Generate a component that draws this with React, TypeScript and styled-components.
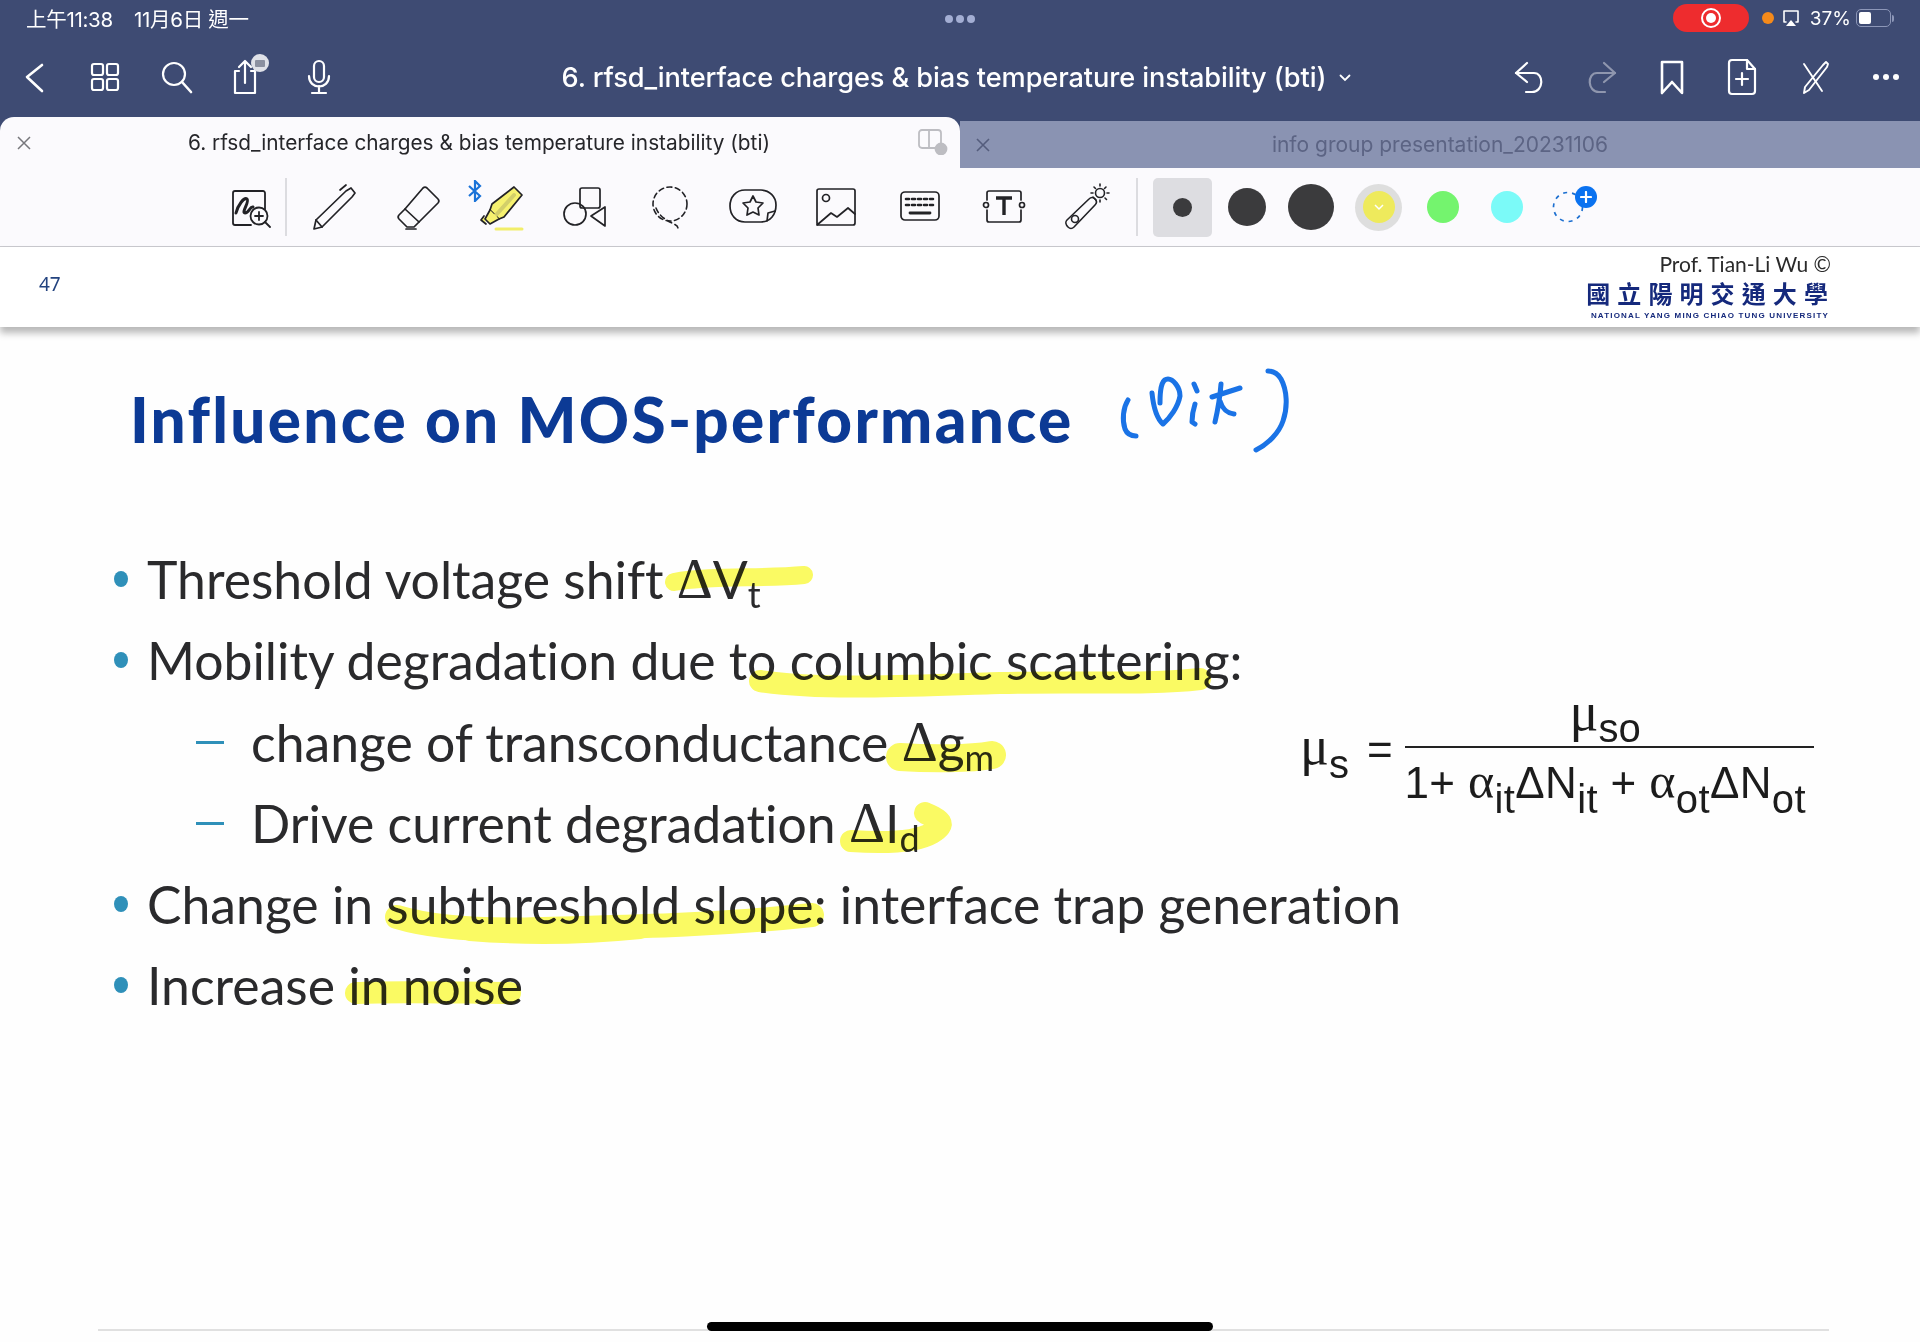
import React from "react";
import styled, { createGlobalStyle } from "styled-components";

const GlobalStyle = createGlobalStyle`
  html, body { margin: 0; padding: 0; background: #fff; }
  * { box-sizing: border-box; }
`;

const Page = styled.div`
  width: 1920px;
  height: 1342px;
  overflow: hidden;
  position: relative;
  background: #fefefe;
  font-family: Inter, "Noto Sans CJK TC", sans-serif;
`;

const Top = styled.div`
  height: 117px;
  background: #3e4b73;
  color: #fff;
`;

const StatusBar = styled.div`
  height: 38px;
  display: flex;
  align-items: center;
  padding-left: 26px;
  padding-bottom: 2px;
  font-size: 20.5px;
  position: relative;
`;

const StatusClock = styled.span`
  width: 108px;
  letter-spacing: -0.3px;
`;

const StatusDate = styled.span`
  letter-spacing: -0.3px;
`;

const Dots = styled.div`
  position: absolute;
  left: 945px;
  top: 15px;
  display: flex;
  gap: 3px;
`;

const Dot = styled.i`
  width: 8px;
  height: 8px;
  border-radius: 50%;
  background: #a3aed3;
`;

const StatusRight = styled.div`
  margin-left: auto;
  display: flex;
  align-items: center;
  height: 38px;
  padding-right: 26px;
`;

const RecordPill = styled.div`
  width: 76px;
  height: 28px;
  border-radius: 14px;
  background: #ee2c2e;
  display: flex;
  align-items: center;
  justify-content: center;
  margin-right: 13px;
  filter: blur(0.5px);
`;

const RecordRing = styled.div`
  width: 20px;
  height: 20px;
  border-radius: 50%;
  background: #ee2c2e;
  border: 2px solid #fff;
  display: flex;
  align-items: center;
  justify-content: center;
  &::after {
    content: "";
    width: 10px;
    height: 10px;
    border-radius: 50%;
    background: #fff;
  }
`;

const OrangeDot = styled.div`
  width: 12px;
  height: 12px;
  border-radius: 50%;
  background: #f58a1a;
  margin-right: 7px;
`;

const Percent = styled.span`
  font-size: 19px;
  margin: 0 5px 0 9px;
`;

const BatteryBody = styled.div`
  width: 35px;
  height: 18px;
  border: 1.5px solid #8d97b8;
  border-radius: 5px;
  padding: 2px;
  &::before {
    content: "";
    display: block;
    width: 12px;
    height: 100%;
    border-radius: 2px;
    background: #fff;
  }
`;

const BatteryCap = styled.div`
  width: 2px;
  height: 7px;
  margin-left: 1px;
  border-radius: 0 2px 2px 0;
  background: #8d97b8;
`;

const NavBar = styled.div`
  height: 79px;
  display: flex;
  align-items: center;
  padding-bottom: 1px;
  margin-left: -2px;
`;

const NavSlot = styled.div<{ $dim?: boolean }>`
  width: 71.5px;
  height: 48px;
  display: flex;
  align-items: center;
  justify-content: center;
  position: relative;
  opacity: ${(p) => (p.$dim ? 0.42 : 1)};
`;

const NavTitle = styled.div`
  flex: 1;
  display: flex;
  align-items: center;
  padding-left: 206px;
  font-size: 27.2px;
  font-weight: 500;
  letter-spacing: -0.1px;
  white-space: nowrap;
`;

const TitleCaret = styled.svg`
  margin-left: 13px;
  margin-top: 2px;
`;

const NavRight = styled.div`
  display: flex;
`;

const ShareBadge = styled.div`
  position: absolute;
  left: 38px;
  top: 1px;
  width: 18px;
  height: 18px;
  border-radius: 50%;
  background: #dfe1e8;
  display: flex;
  align-items: center;
  justify-content: center;
  &::after {
    content: "";
    width: 10px;
    height: 7px;
    background: #8b90a0;
    border-radius: 1px;
  }
`;

const TabBar = styled.div`
  height: 51px;
  display: flex;
  background: #3e4b73;
`;

const ActiveTab = styled.div`
  width: 960px;
  background: #fbfafd;
  border-radius: 14px 14px 0 0;
  display: flex;
  align-items: center;
  position: relative;
  font-size: 20.8px;
  color: #26262a;
`;

const IdleTab = styled.div`
  flex: 1;
  margin-top: 4px;
  background: #8a93b2;
  display: flex;
  align-items: center;
  position: relative;
  font-size: 21px;
  color: #5c6484;
`;

const TabClose = styled.svg`
  flex: none;
`;

const TabLabel = styled.span<{ $balance: number }>`
  flex: 1;
  text-align: center;
  white-space: nowrap;
  margin-right: ${(p) => p.$balance}px;
`;

const SplitIcon = styled.svg`
  position: absolute;
  left: 918px;
  top: 12px;
`;

const ToolBar = styled.div`
  height: 79px;
  background: #fbfafd;
  border-bottom: 1.5px solid #c9c9ce;
  display: flex;
  align-items: center;
  padding-left: 209px;
`;

const ToolSlot = styled.div<{ $w?: number }>`
  width: ${(p) => p.$w ?? 83.7}px;
  height: 60px;
  display: flex;
  align-items: center;
  justify-content: center;
  position: relative;
  flex: none;
`;

const ToolDivider = styled.div<{ $before?: number; $after: number }>`
  width: 1.5px;
  height: 58px;
  background: #dcdce0;
  margin-left: ${(p) => p.$before ?? 0}px;
  margin-right: ${(p) => p.$after}px;
  flex: none;
`;

const Bluetooth = styled.svg`
  position: absolute;
  left: 8px;
  top: 3px;
`;

const SelectedBox = styled.div`
  width: 59px;
  height: 59px;
  margin-left: 15px;
  margin-right: 3px;
  border-radius: 5px;
  background: #dddde1;
  display: flex;
  align-items: center;
  justify-content: center;
  flex: none;
`;

const ColorSlot = styled.div<{ $w?: number; $shift?: number }>`
  width: ${(p) => p.$w ?? 64}px;
  margin-left: ${(p) => p.$shift ?? 0}px;
  display: flex;
  align-items: center;
  justify-content: center;
  flex: none;
  position: relative;
`;

const Swatch = styled.div<{ $size: number; $color: string }>`
  width: ${(p) => p.$size}px;
  height: ${(p) => p.$size}px;
  border-radius: 50%;
  background: ${(p) => p.$color};
`;

const YellowRing = styled.div`
  width: 47px;
  height: 47px;
  border-radius: 50%;
  background: #dedede;
  display: flex;
  align-items: center;
  justify-content: center;
`;

const YellowFill = styled.div`
  width: 32px;
  height: 32px;
  border-radius: 50%;
  background: #eeea5c;
  display: flex;
  align-items: center;
  justify-content: center;
`;

const AddBadge = styled.div`
  position: absolute;
  left: 36px;
  top: -5px;
  width: 22px;
  height: 22px;
  border-radius: 50%;
  background: #0a72f0;
  color: #fff;
  display: flex;
  align-items: center;
  justify-content: center;
`;

const SlideHeader = styled.div`
  height: 80px;
  background: #fff;
  box-shadow: 0 6px 7px rgba(0, 0, 0, 0.28);
  position: relative;
  z-index: 1;
  display: flex;
  align-items: center;
  justify-content: space-between;
  padding: 0 89px 0 39px;
`;

const PageNumber = styled.span`
  font-family: "Noto Sans", sans-serif;
  font-size: 19px;
  color: #23437f;
  margin-bottom: 7px;
`;

const Brand = styled.div`
  display: flex;
  flex-direction: column;
  align-items: flex-end;
  margin-top: -2px;
`;

const ProfName = styled.div`
  font-family: Lato, sans-serif;
  font-size: 21px;
  line-height: 24px;
  color: #2a2a2a;
  margin-bottom: 3px;
`;

const SchoolName = styled.div`
  font-family: "Noto Sans CJK TC", sans-serif;
  font-weight: 700;
  font-size: 24px;
  line-height: 28px;
  letter-spacing: 7.1px;
  margin-right: -4px;
  color: #15297c;
`;

const SchoolLatin = styled.div`
  font-family: "Liberation Sans", sans-serif;
  font-weight: 700;
  font-size: 8px;
  line-height: 11px;
  letter-spacing: 1.17px;
  margin-top: 3px;
  margin-right: 2px;
  white-space: nowrap;
  color: #15297c;
`;

const Slide = styled.div`
  position: relative;
  height: 1016px;
  padding-left: 130px;
  font-family: Lato, "Liberation Sans", sans-serif;
  font-variant-ligatures: none;
`;

const Title = styled.h1`
  margin: 0;
  padding-top: 58px;
  height: 212px;
  font-size: 62px;
  line-height: 68px;
  font-weight: 900;
  letter-spacing: 2.3px;
  color: #0c3a95;
  white-space: nowrap;
`;

const BulletList = styled.div`
  margin-left: -16px;
`;

const Row = styled.div<{ $h: number; $sub?: boolean }>`
  height: ${(p) => p.$h}px;
  display: flex;
  align-items: center;
  padding-left: ${(p) => (p.$sub ? 82 : 0)}px;
  font-size: 51.7px;
  color: #2a2a2c;
  white-space: nowrap;
`;

const BulletDot = styled.i`
  width: 14px;
  height: 16px;
  border-radius: 50%;
  background: #2f90b9;
  margin-right: 19px;
  flex: none;
`;

const SubDash = styled.i`
  width: 28px;
  height: 3px;
  background: #2f90b9;
  margin-right: 27px;
  flex: none;
`;

const Delta = styled.span`
  font-family: "Liberation Serif", serif;
  font-size: 56px;
`;

const Low = styled.span`
  font-size: 36px;
  position: relative;
  top: 15px;
`;

/* the pasted formula image floats on the slide */
const Formula = styled.div`
  position: absolute;
  left: 1300px;
  top: 361px;
  display: flex;
  align-items: center;
  font-family: "Liberation Sans", sans-serif;
  font-size: 44px;
  color: #1c1c1c;
`;

const Mu = styled.span`
  font-family: "Liberation Serif", serif;
  font-size: 54px;
  position: relative;
  top: -6px;
`;

const Alpha = styled.span`
  font-family: "Liberation Serif", serif;
  font-size: 50px;
`;

const Lower = styled.span<{ $top?: number }>`
  font-size: 40px;
  position: relative;
  top: ${(p) => p.$top ?? 15}px;
`;

const Equals = styled.span`
  margin: 0 12px 0 18px;
  position: relative;
  top: -2px;
`;

const Fraction = styled.div`
  display: flex;
  flex-direction: column;
  align-items: center;
  width: 409px;
`;

const Numerator = styled.div`
  height: 60px;
  line-height: 60px;
  border-bottom: 2px solid #222;
  width: 100%;
  padding-right: 8px;
  text-align: center;
  white-space: nowrap;
`;

const Denominator = styled.div`
  height: 68px;
  line-height: 66px;
  padding-right: 8px;
  letter-spacing: 0.37px;
  white-space: nowrap;
`;

const Ink = styled.svg`
  position: absolute;
  left: 0;
  top: -326px;
  pointer-events: none;
`;

const Marker = styled(Ink)`
  mix-blend-mode: multiply;
`;

const FootRule = styled.div`
  position: absolute;
  left: 98px;
  top: 1002px;
  width: 1731px;
  height: 2px;
  background: #e0e0e0;
`;

const HomeBar = styled.div`
  position: absolute;
  left: 707px;
  top: 995px;
  width: 506px;
  height: 9px;
  border-radius: 5px;
  background: #000;
`;

const I = ({ w = 48, h = 48, c = "#fff", sw = 2.2, children }: { w?: number; h?: number; c?: string; sw?: number; children: React.ReactNode }) => (
  <svg width={w} height={h} viewBox={`0 0 ${w} ${h}`} fill="none" stroke={c} strokeWidth={sw} strokeLinecap="round" strokeLinejoin="round">
    {children}
  </svg>
);

const T = "#222226";

const markerStrokes = [
  { d: "M 674 581 C 710 574 760 578 804 574", w: 18 },
  { d: "M 760 680 C 830 690 920 684 1000 682 S 1150 684 1200 678", w: 22 },
  { d: "M 900 756 C 930 758 970 758 992 754", w: 28 },
  { d: "M 851 840 C 880 842 915 842 932 832 S 938 818 925 812", w: 22 },
  { d: "M 397 916 C 430 926 480 930 540 928 S 700 926 812 914", w: 24 },
  { d: "M 470 930 C 520 934 580 934 640 928", w: 20 },
  { d: "M 356 992 C 400 990 470 992 510 992", w: 22 },
];

const App = () => (
  <Page>
    <GlobalStyle />
    <Top>
      <StatusBar>
        <StatusClock>上午11:38</StatusClock>
        <StatusDate>11月6日 週一</StatusDate>
        <Dots>
          <Dot />
          <Dot />
          <Dot />
        </Dots>
        <StatusRight>
          <RecordPill>
            <RecordRing />
          </RecordPill>
          <OrangeDot />
          <I w={20} h={20} sw={1.6}>
            <path d="M5 14H3V3h14v11h-2" />
            <path d="M10 12l5 6H5z" fill="#fff" stroke="none" />
          </I>
          <Percent>37%</Percent>
          <BatteryBody />
          <BatteryCap />
        </StatusRight>
      </StatusBar>
      <NavBar>
        <NavSlot>
          <I>
            <path d="M32 12L17 24l15 14" strokeWidth="2.6" />
          </I>
        </NavSlot>
        <NavSlot>
          <I>
            <rect x="11" y="11" width="11" height="11" rx="2" />
            <rect x="26" y="11" width="11" height="11" rx="2" />
            <rect x="11" y="26" width="11" height="11" rx="2" />
            <rect x="26" y="26" width="11" height="11" rx="2" />
          </I>
        </NavSlot>
        <NavSlot>
          <I>
            <circle cx="21" cy="21" r="11" />
            <path d="M29 29l9 10" strokeWidth="2.6" />
          </I>
        </NavSlot>
        <NavSlot>
          <I>
            <path d="M15 18h-4v22h20V18h-4" />
            <path d="M21 30V9M15 14l6-6 6 6" />
          </I>
          <ShareBadge />
        </NavSlot>
        <NavSlot>
          <I>
            <rect x="18" y="8" width="10" height="21" rx="5" />
            <path d="M13 23c0 14 20 14 20 0M23 33v6M16 40h14" />
          </I>
        </NavSlot>
        <NavTitle>
          6. rfsd_interface charges &amp; bias temperature instability (bti)
          <TitleCaret width="12" height="8" viewBox="0 0 12 8" fill="none" stroke="#fff" strokeWidth="1.8" strokeLinecap="round">
            <path d="M1.5 1.5L6 6l4.5-4.5" />
          </TitleCaret>
        </NavTitle>
        <NavRight>
          <NavSlot>
            <I>
              <path d="M24 10L13 20l11 9" />
              <path d="M13 20h18c10 0 10 19-2 19h-6" />
            </I>
          </NavSlot>
          <NavSlot $dim>
            <I>
              <path d="M30 10l11 10-11 9" />
              <path d="M41 20H23c-10 0-10 19 2 19h6" />
            </I>
          </NavSlot>
          <NavSlot>
            <I sw={2.6}>
              <path d="M16 9h20v31l-10-11-10 11z" />
            </I>
          </NavSlot>
          <NavSlot>
            <I>
              <path d="M15 7h15l8 9v22a3 3 0 0 1-3 3H15a3 3 0 0 1-3-3V10a3 3 0 0 1 3-3z" />
              <path d="M30 7v9h8M25 20v12M19 26h12" />
            </I>
          </NavSlot>
          <NavSlot>
            <I sw={1.9}>
              <path d="M15 11l18 27" />
              <path d="M34 12l3-3 2 2-1 3-18 23-5 3 1-6z" />
            </I>
          </NavSlot>
          <NavSlot>
            <I w={30} h={8} c="none">
              <circle cx="7" cy="4" r="3" fill="#fff" />
              <circle cx="17" cy="4" r="3" fill="#fff" />
              <circle cx="27" cy="4" r="3" fill="#fff" />
            </I>
          </NavSlot>
        </NavRight>
      </NavBar>
    </Top>
    <TabBar>
      <ActiveTab>
        <TabClose width="48" height="14" viewBox="0 0 48 14" fill="none" stroke="#77777c" strokeWidth="1.5">
          <path d="M18 1l12 12M30 1L18 13" />
        </TabClose>
        <TabLabel $balance={50}>6. rfsd_interface charges &amp; bias temperature instability (bti)</TabLabel>
        <SplitIcon width="30" height="26" viewBox="0 0 30 26" fill="none" stroke="#bdbdc2" strokeWidth="1.8">
          <rect x="1" y="1" width="22" height="18" rx="3" />
          <path d="M11 1v18" />
          <circle cx="23" cy="20" r="5.5" fill="#bdbdc2" />
        </SplitIcon>
      </ActiveTab>
      <IdleTab>
        <TabClose width="46" height="14" viewBox="0 0 46 14" fill="none" stroke="#555d7d" strokeWidth="1.6">
          <path d="M17 1l12 12M29 1L17 13" />
        </TabClose>
        <TabLabel $balance={46}>info group presentation_20231106</TabLabel>
      </IdleTab>
    </TabBar>
    <ToolBar>
      <ToolSlot $w={76}>
        <I c={T} sw={1.8}>
          <path d="M42 24V8a2 2 0 0 0-2-2H12a2 2 0 0 0-2 2v30a2 2 0 0 0 2 2h16" transform="translate(0 2)" />
          <path d="M13 30c2-8 8-16 11-14s-6 14-2 14 5-7 8-6" strokeWidth="3" />
          <circle cx="36" cy="33" r="8.5" fill="#fbfafd" />
          <path d="M42 39l5 5M36 29v8M32 33h8" />
        </I>
      </ToolSlot>
      <ToolDivider $after={6} />
      <ToolSlot>
        <I c={T} sw={1.7}>
          <path d="M4 46l2-9L36 8l5-3 4 5-3 4-30 30z" />
          <path d="M6 37l6 7M30 7l6-5" />
        </I>
      </ToolSlot>
      <ToolSlot>
        <I c={T} sw={1.7}>
          <path d="M33 5l11 11a3 3 0 0 1 0 4L25 39 11 26 29 5a3 3 0 0 1 4 0z" />
          <path d="M11 26l-6 6a3 3 0 0 0 0 4l8 8h7l5-5M12 46h10" />
        </I>
      </ToolSlot>
      <ToolSlot>
        <Bluetooth width="14" height="22" viewBox="0 0 14 22" fill="none" stroke="#1a73d8" strokeWidth="2.2">
          <path d="M1 6l11 10-5 5V1l5 5L1 16" />
        </Bluetooth>
        <I c={T} sw={1.7}>
          <path d="M36 4l8 8-18 22-5 2-9-9 2-6z" fill="#f6f16f" />
          <path d="M36 12l-18 20" stroke="#d3cf6a" strokeWidth="4" />
          <path d="M12 27l-5 9 5 5 9-5M6 33l-3 4 5 4" fill="#f6f16f" />
          <path d="M18 46h26" stroke="#f2ee6a" strokeWidth="3" />
        </I>
      </ToolSlot>
      <ToolSlot>
        <I c={T} sw={1.7}>
          <rect x="19" y="5" width="20" height="20" rx="2" />
          <circle cx="14" cy="31" r="11" />
          <path d="M44 24v19L30 33z" />
        </I>
      </ToolSlot>
      <ToolSlot>
        <I c={T} sw={1.6}>
          <g strokeDasharray="5 3.5">
            <circle cx="25" cy="21" r="17" />
            <path d="M11 25c3 8 10 12 16 15s6 3 6 7" />
          </g>
        </I>
      </ToolSlot>
      <ToolSlot>
        <I c={T} sw={1.7}>
          <path d="M16 7h16a15 15 0 0 1 15 15c0 10-6 17-15 17H16C7 39 1 32 1 23 1 14 7 7 16 7z" />
          <path d="M24 13l3 6 7 1-5 5 1 7-6-3-6 3 1-7-5-5 7-1z" />
          <path d="M46 28l-7 2-1 8" />
        </I>
      </ToolSlot>
      <ToolSlot>
        <I c={T} sw={1.7}>
          <rect x="5" y="6" width="38" height="36" rx="2" />
          <circle cx="14" cy="15" r="3.5" />
          <path d="M5 42l14-12 6 4 11-9 7 6" />
        </I>
      </ToolSlot>
      <ToolSlot>
        <I c={T} sw={1.7}>
          <rect x="5" y="9" width="38" height="28" rx="4" />
          <path d="M10 16h28M10 22h28" strokeDasharray="3 3" strokeWidth="2.6" />
          <path d="M14 30h20" strokeWidth="2.8" />
        </I>
      </ToolSlot>
      <ToolSlot>
        <I c={T} sw={1.7}>
          <path d="M7 17v-7a2 2 0 0 1 2-2h30a2 2 0 0 1 2 2v7M7 27v10a2 2 0 0 0 2 2h30a2 2 0 0 0 2-2V27" />
          <circle cx="6" cy="22" r="2.5" />
          <circle cx="42" cy="22" r="2.5" />
          <path d="M16 15h16M24 15v17" strokeWidth="3.4" strokeLinecap="butt" />
        </I>
      </ToolSlot>
      <ToolSlot>
        <I c={T} sw={1.6}>
          <path d="M3 37L25 16c2-2 4-2 6 0s2 4 0 6L10 44c-2 2-4 2-6 0s-3-5-1-7z" />
          <circle cx="11" cy="36" r="3.5" />
          <path d="M29 14l3 3" />
          <circle cx="36" cy="10" r="4.5" />
          <path d="M36 1v2M36 17v2M27 10h2M43 10h2M30 4l1.5 1.5M41 15l1.5 1.5M42 4l-1.5 1.5" />
        </I>
      </ToolSlot>
      <ToolDivider $before={7} $after={0} />
      <SelectedBox>
        <Swatch $size={19} $color="#3b3b3d" />
      </SelectedBox>
      <ColorSlot>
        <Swatch $size={38} $color="#3b3b3d" />
      </ColorSlot>
      <ColorSlot>
        <Swatch $size={46} $color="#3b3b3d" />
      </ColorSlot>
      <ColorSlot $shift={4}>
        <YellowRing>
          <YellowFill>
            <svg width="10" height="7" viewBox="0 0 10 7" fill="none" stroke="#fff" strokeWidth="1.5">
              <path d="M1 1l4 4 4-4" />
            </svg>
          </YellowFill>
        </YellowRing>
      </ColorSlot>
      <ColorSlot>
        <Swatch $size={32} $color="#74f46e" />
      </ColorSlot>
      <ColorSlot>
        <Swatch $size={32} $color="#7bfaf8" />
      </ColorSlot>
      <ColorSlot $w={58}>
        <svg width="32" height="32" viewBox="0 0 32 32" fill="none" stroke="#1c6fd0" strokeWidth="1.7" strokeDasharray="4 5">
          <circle cx="16" cy="16" r="14.5" />
        </svg>
        <AddBadge>
          <svg width="12" height="12" viewBox="0 0 12 12" fill="none" stroke="#fff" strokeWidth="2.2" strokeLinecap="round">
            <path d="M6 1v10M1 6h10" />
          </svg>
        </AddBadge>
      </ColorSlot>
    </ToolBar>
    <SlideHeader>
      <PageNumber>47</PageNumber>
      <Brand>
        <ProfName>Prof. Tian-Li Wu ©</ProfName>
        <SchoolName>國立陽明交通大學</SchoolName>
        <SchoolLatin>NATIONAL YANG MING CHIAO TUNG UNIVERSITY</SchoolLatin>
      </Brand>
    </SlideHeader>
    <Slide>
      <Title>Influence on MOS-performance</Title>
      <BulletList>
        <Row $h={80}>
          <BulletDot />
          Threshold voltage shift&nbsp;<Delta>Δ</Delta>V<Low>t</Low>
        </Row>
        <Row $h={82}>
          <BulletDot />
          Mobility degradation due to columbic scattering:
        </Row>
        <Row $h={82} $sub>
          <SubDash />
          change of transconductance&nbsp;<Delta>Δ</Delta>g<Low>m</Low>
        </Row>
        <Row $h={80} $sub>
          <SubDash />
          Drive current degradation&nbsp;<Delta>Δ</Delta>I<Low>d</Low>
        </Row>
        <Row $h={81}>
          <BulletDot />
          Change in subthreshold slope: interface trap generation
        </Row>
        <Row $h={81}>
          <BulletDot />
          Increase in noise
        </Row>
      </BulletList>
      <Formula>
        <Mu>μ</Mu>
        <Lower $top={12}>s</Lower>
        <Equals>=</Equals>
        <Fraction>
          <Numerator>
            <Mu>μ</Mu>
            <Lower $top={6}>so</Lower>
          </Numerator>
          <Denominator>
            1+ <Alpha>α</Alpha>
            <Lower>it</Lower>ΔN<Lower>it</Lower> + <Alpha>α</Alpha>
            <Lower>ot</Lower>ΔN<Lower>ot</Lower>
          </Denominator>
        </Fraction>
      </Formula>
      <Marker width="1920" height="1342" viewBox="0 0 1920 1342" fill="none" strokeLinecap="round" strokeLinejoin="round">
        {markerStrokes.map((s) => (
          <path key={s.d} d={s.d} stroke="#fbfb63" strokeWidth={s.w} />
        ))}
      </Marker>
      <Ink width="1920" height="1342" viewBox="0 0 1920 1342" fill="none" stroke="#1a73e6" strokeWidth="5" strokeLinecap="round" strokeLinejoin="round">
        <path d="M1128 399c-5 8-6 20-3 29 2 5 6 7 11 7" />
        <path d="M1152 392c1 10 3 24 11 31 7-6 15-17 17-28 0-9-7-17-12-17-5 0-8 5-8 24" />
        <path d="M1194 383l3 7M1195 403c-2 6-3 12-3 18l3 2" />
        <path d="M1212 396l28-9M1221 383c-1 13-3 25-6 38M1220 400c2 6 5 12 14 13" />
        <path d="M1268 370c6 0 10 3 13 8 6 11 7 28 2 42-4 12-15 23-27 29" />
      </Ink>
      <FootRule />
      <HomeBar />
    </Slide>
  </Page>
);

export default App;
